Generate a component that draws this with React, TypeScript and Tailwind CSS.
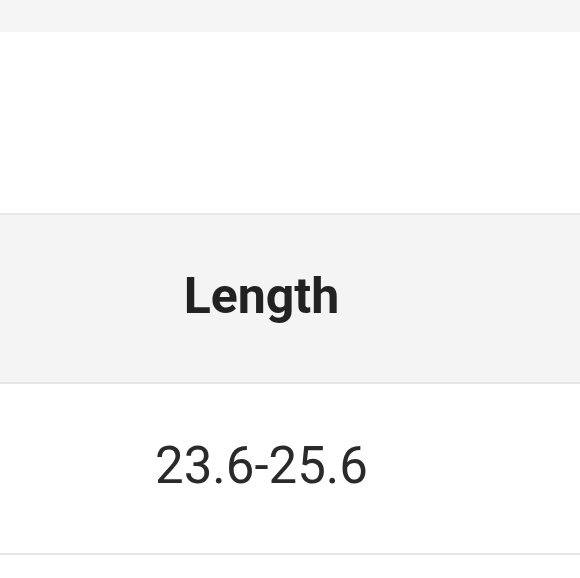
const rows = [{ length: '23.6-25.6' }];

export default function App() {
  return (
    <div className="w-[580px] h-[578px] overflow-hidden bg-white" style={{ fontFamily: 'Roboto, "Noto Sans", sans-serif' }}>
      <div className="h-[32px] bg-[#f5f5f5]" />
      <div className="h-[181px]" />
      <div className="border-t-2 border-[#e8e8e8]">
        <div className="flex h-[169px] items-center bg-[#f4f4f4] border-b-2 border-[#e6e6e6] pb-[4px]">
          <div className="w-[523px] text-center text-[50px] font-bold text-[#222222]">Length</div>
        </div>
        {rows.map((r) => (
          <div key={r.length} className="flex h-[171px] items-center border-b-2 border-[#e6e6e6] pb-[4px]">
            <div className="w-[523px] text-center text-[51px] text-[#2a2a2a]">{r.length}</div>
          </div>
        ))}
      </div>
    </div>
  );
}
